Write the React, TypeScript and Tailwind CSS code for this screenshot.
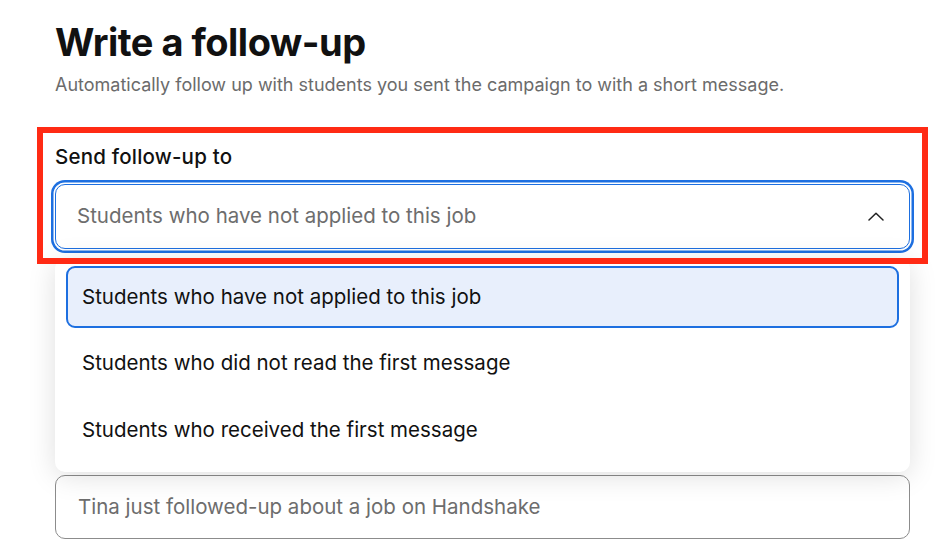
import React from "react";

export default function App() {
  const font = { fontFamily: "Inter, 'Noto Sans', sans-serif" };
  return (
    <div className="relative w-[948px] h-[548px] overflow-hidden bg-white" style={font}>
      <div className="ml-[55px] w-[855px] flex flex-col">
        <h1 className="mt-[19px] h-[46px] leading-[46px] text-[38px] font-bold tracking-[-0.5px] text-[#111111]">
          Write a follow-up
        </h1>
        <p className="mt-[8px] text-[18px] leading-[24px] text-[#6b6b6b]">
          Automatically follow up with students you sent the campaign to with a short message.
        </p>
        <label className="mt-[47px] text-[20.5px] leading-[26px] font-medium tracking-[0.2px] text-[#111111]">
          Send follow-up to
        </label>
        <div className="relative mt-[14px]">
          <div className="h-[65px] rounded-[10px] border-[1.5px] border-[#1d6fe0] ring-[2.5px] ring-[#1d6fe0] ring-offset-[1.5px] ring-offset-white bg-white flex items-center justify-between pl-[21px] pr-[25px]">
            <span className="text-[20.5px] text-[#6d6d6d]">Students who have not applied to this job</span>
            <svg width="16" height="9" viewBox="0 0 16 9" fill="none">
              <path d="M1 8L8 1.2L15 8" stroke="#222" strokeWidth="1.5" strokeLinecap="round" strokeLinejoin="round" />
            </svg>
          </div>
          <div className="absolute z-10 left-0 top-[74px] w-[855px] h-[214px] rounded-[10px] bg-white shadow-[0_4px_28px_rgba(0,0,0,0.13)] pt-[8px] px-[11px] flex flex-col gap-[4.5px]">
            <div className="h-[62px] shrink-0 rounded-[9px] border-2 border-[#1d6fe0] bg-[#e8effc] flex items-center px-[14px] text-[20.5px] text-[#111111]">
              Students who have not applied to this job
            </div>
            <div className="h-[62px] shrink-0 flex items-center px-[16px] text-[20.5px] text-[#111111]">
              Students who did not read the first message
            </div>
            <div className="h-[62px] shrink-0 flex items-center px-[16px] text-[20.5px] text-[#111111]">
              Students who received the first message
            </div>
          </div>
        </div>
        <div className="mt-[226px] h-[64px] rounded-[10px] border border-[#8c8c8c] bg-white flex items-center px-[22px] text-[20.5px] text-[#6d6d6d]">
          Tina just followed-up about a job on Handshake
        </div>
      </div>
      <div className="pointer-events-none absolute z-20 left-[37px] top-[127px] w-[891px] h-[137px] border-[6px] border-[#ff2a14]" />
    </div>
  );
}
